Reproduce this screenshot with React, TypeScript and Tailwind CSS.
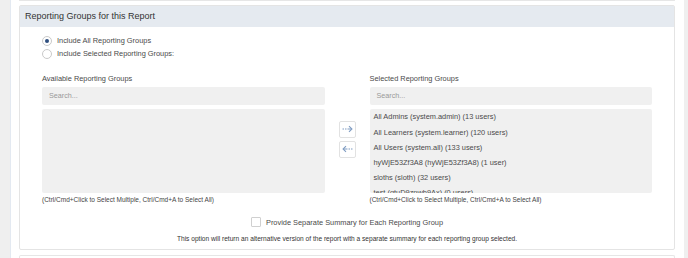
import React from "react";

const groups = [
  "All Admins (system.admin) (13 users)",
  "All Learners (system.learner) (120 users)",
  "All Users (system.all) (133 users)",
  "hyWjE53Zf3A8 (hyWjE53Zf3A8) (1 user)",
  "sloths (sloth) (32 users)",
  "test (qtuD9zpwb9Ax) (0 users)",
];

function DashArrow({ dir }: { dir: "right" | "left" }) {
  return (
    <svg width="11" height="8" viewBox="0 0 11 8" fill="none" stroke="#7f9cc2" strokeWidth="1.1">
      {dir === "right" ? (
        <>
          <path d="M0.5 4h1.5M3 4h1.5M5.5 4h4" />
          <path d="M7 1.2 9.9 4 7 6.8" />
        </>
      ) : (
        <>
          <path d="M10.5 4H9M8 4H6.5M5.5 4h-4" />
          <path d="M4 1.2 1.1 4 4 6.8" />
        </>
      )}
    </svg>
  );
}

function GroupColumn({ label, items }: { label: string; items: string[] }) {
  return (
    <div className="flex flex-col">
      <div className="h-[12px] text-[7.4px] leading-[12px] text-[#4a4a4a]">{label}</div>
      <div className="mt-[2px] flex h-[18px] items-center rounded-[2px] bg-[#f0f0f0] px-[7px] text-[7.2px] text-[#999]">
        Search...
      </div>
      <div className="mt-[4px] h-[84px] overflow-hidden rounded-[2px] bg-[#f0f0f0] px-[4px]">
        {items.map((item) => (
          <div key={item} className="h-[15.2px] whitespace-nowrap text-[7.4px] leading-[15.2px] text-[#4a4a4a]">
            {item}
          </div>
        ))}
      </div>
      <div className="mt-[2px] h-[10px] whitespace-nowrap text-[6.5px] leading-[10px] text-[#444]">
        (Ctrl/Cmd+Click to Select Multiple, Ctrl/Cmd+A to Select All)
      </div>
    </div>
  );
}

export default function App() {
  return (
    <div
      className="flex h-[258px] w-[688px] overflow-hidden bg-white"
      style={{ fontFamily: '"Liberation Sans", Arial, sans-serif' }}
    >
      <div className="w-[10px] shrink-0 bg-[#efefef]" />
      <div className="flex flex-1 flex-col border-l border-[#e3e9f1] pl-[8px] pr-[8px]">
        <div className="h-[3px] rounded-b-[2px] border-x border-b border-[#e6e6e6]" />

        <section className="mt-[4px] rounded-[2px] border border-[#e4e4e4]">
          <header className="flex h-[21px] items-center bg-[#e5eaf0] px-[5px] text-[9px] text-[#333]">
            Reporting Groups for this Report
          </header>

          <div className="px-[22px] pb-[5px] pt-[7px]">
            <label className="flex h-[13px] items-center gap-[5px] text-[7.4px] text-[#4a4a4a]">
              <span className="flex h-[10px] w-[10px] items-center justify-center rounded-full border border-[#c9c9c9] bg-white">
                <span className="h-[4px] w-[4px] rounded-full bg-[#2f4f7f]" />
              </span>
              Include All Reporting Groups
            </label>
            <label className="flex h-[13px] items-center gap-[5px] text-[7.4px] text-[#4a4a4a]">
              <span className="h-[10px] w-[10px] rounded-full border border-[#c9c9c9] bg-white" />
              Include Selected Reporting Groups:
            </label>

            <div className="mt-[13px] grid grid-cols-[1fr_45px_1fr] items-center">
              <GroupColumn label="Available Reporting Groups" items={[]} />
              <div className="flex flex-col items-center gap-[3px]">
                <button className="flex h-[17px] w-[17px] items-center justify-center rounded-[2px] border border-[#e2e2e2] bg-white">
                  <DashArrow dir="right" />
                </button>
                <button className="flex h-[17px] w-[17px] items-center justify-center rounded-[2px] border border-[#e2e2e2] bg-white">
                  <DashArrow dir="left" />
                </button>
              </div>
              <GroupColumn label="Selected Reporting Groups" items={groups} />
            </div>

            <label className="mt-[11px] flex h-[12px] items-center justify-center gap-[5px] text-[7.4px] text-[#4a4a4a]">
              <span className="h-[10px] w-[10px] rounded-[1px] border border-[#d0d0d0] bg-white" />
              Provide Separate Summary for Each Reporting Group
            </label>
            <p className="mt-[6px] h-[10px] whitespace-nowrap text-center text-[6.6px] leading-[10px] text-[#333]">
              This option will return an alternative version of the report with a separate summary for each reporting group selected.
            </p>
          </div>
        </section>

        <div className="mt-[5px] h-[10px] rounded-t-[2px] border-x border-t border-[#e6e6e6]" />
      </div>
      <div className="w-[1px] shrink-0 bg-white" />
      <div className="w-[4px] shrink-0 bg-[#efefef]" />
    </div>
  );
}
